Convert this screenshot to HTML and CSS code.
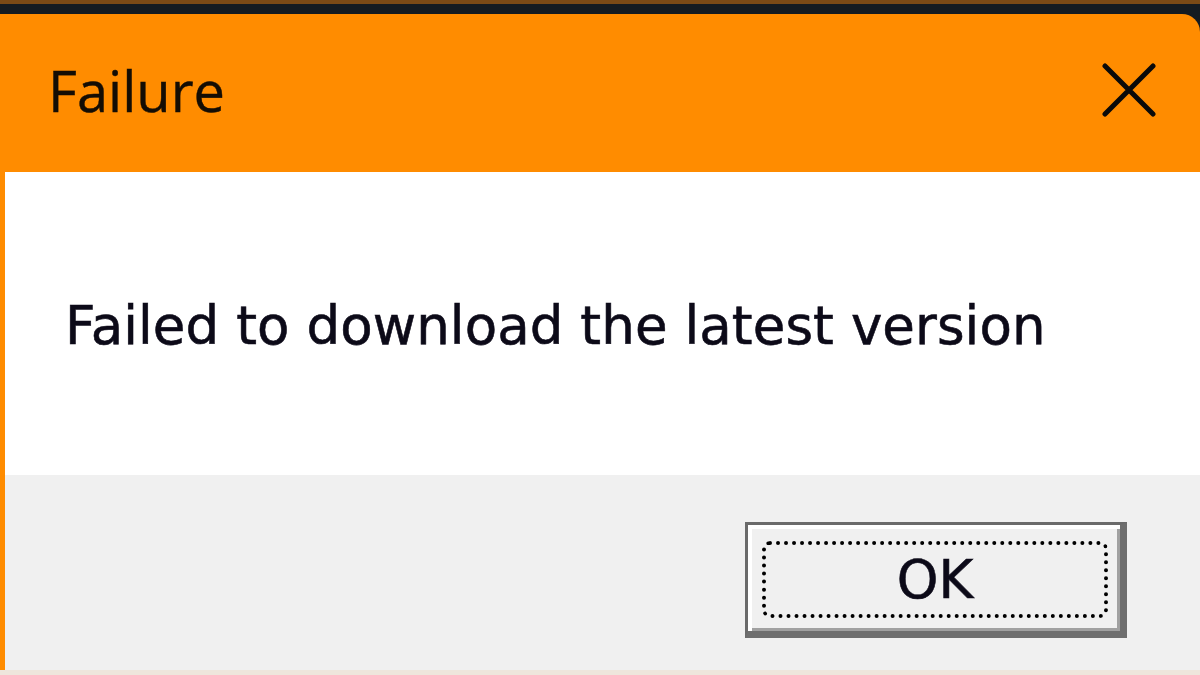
FILE: index.html
```html
<!DOCTYPE html>
<html>
<head>
<meta charset="utf-8">
<link rel="stylesheet" href="styles.css">
</head>
<body>
<div class="screen">
  <div class="strip-brown"></div>
  <div class="strip-dark">
    <div class="dialog">
      <div class="titlebar">
        <span class="title">Failure</span>
        <span class="close" aria-label="Close">
          <svg width="54" height="54" viewBox="0 0 54 54">
            <path d="M3 3 L51 51 M51 3 L3 51" stroke="#0a0a0a" stroke-width="5" stroke-linecap="round" fill="none"/>
          </svg>
        </span>
      </div>
      <div class="content">
        <p class="message">Failed to download the latest version</p>
      </div>
      <div class="footer">
        <button class="ok"><span class="focus">OK</span></button>
      </div>
    </div>
  </div>
  <div class="strip-bottom"></div>
</div>
</body>
</html>
```
FILE: styles.css
```css
html, body {
  margin: 0;
  padding: 0;
  background: #141b21;
}
.screen {
  width: 1200px;
  height: 675px;
  display: flex;
  flex-direction: column;
  overflow: hidden;
}
.strip-brown {
  height: 4px;
  background: #7a4a16;
  flex: none;
}
.strip-dark {
  flex: 1;
  background: #141b21;
  padding-top: 10px;
  display: flex;
  flex-direction: column;
}
.dialog {
  flex: 1;
  display: flex;
  flex-direction: column;
  background: #ff8c00;
  border-top-right-radius: 18px;
  padding-left: 5px;
}
.titlebar {
  height: 158px;
  flex: none;
  display: flex;
  align-items: center;
  justify-content: space-between;
  padding-left: 43px;
  padding-right: 44px;
}
.title {
  font-family: "Open Sans", "Noto Sans", sans-serif;
  font-size: 56px;
  color: #140d04;
  margin-top: -6px;
  -webkit-text-stroke: 0.4px #140d04;
}
.close {
  display: flex;
  margin-top: -6px;
}
.content {
  height: 303px;
  flex: none;
  background: #ffffff;
  display: flex;
  align-items: center;
  padding-left: 60px;
}
.message {
  margin: 0;
  margin-top: 4px;
  font-family: "DejaVu Sans", Verdana, sans-serif;
  font-size: 53px;
  letter-spacing: 0.08px;
  color: #0c0a18;
  -webkit-text-stroke: 0.6px #0c0a18;
}
.footer {
  flex: 1;
  background: #f0f0f0;
  display: flex;
  justify-content: flex-end;
  align-items: flex-start;
  padding-top: 47px;
  padding-right: 73px;
}
.ok {
  width: 382px;
  height: 116px;
  box-sizing: border-box;
  border-style: solid;
  border-color: #6a6a6a #6e6e6e #6e6e6e #6a6a6a;
  border-width: 3px 7px 7px 3px;
  background: #f0f0f0;
  box-shadow: inset 4px 4px 0 #ffffff, inset -3px -3px 0 #a0a0a0;
  padding: 16px 12px 13px 14px;
  display: flex;
  margin: 0;
}
.focus {
  flex: 1;
  border: 4px dotted #000;
  border-radius: 8px;
  display: flex;
  align-items: center;
  justify-content: center;
  font-family: "DejaVu Sans", Verdana, sans-serif;
  font-size: 53px;
  color: #0c0a18;
  -webkit-text-stroke: 0.6px #0c0a18;
}
.strip-bottom {
  height: 5px;
  flex: none;
  background: #eee6dc;
}
```
